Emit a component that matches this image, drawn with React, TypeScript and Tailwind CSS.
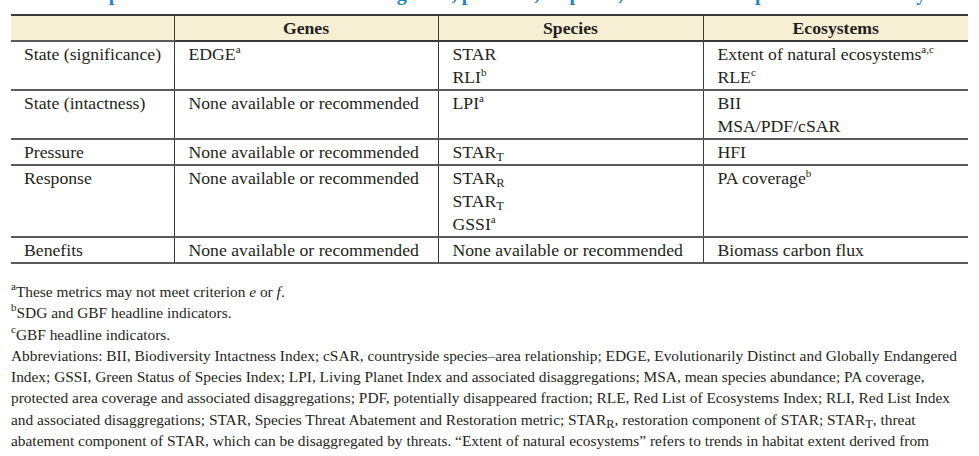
import { FC, ReactNode } from "react";

const serif = { fontFamily: '"Liberation Serif", "Times New Roman", serif' };

const Sup: FC<{ children: ReactNode }> = ({ children }) => (
  <sup className="text-[11px] relative -top-[7px]">{children}</sup>
);

const Sub: FC<{ children: ReactNode }> = ({ children }) => (
  <sub className="text-[12.5px] relative top-[3px]">{children}</sub>
);

const none = "None available or recommended";

const rows: { label: string; genes: ReactNode[]; species: ReactNode[]; eco: ReactNode[] }[] = [
  {
    label: "State (significance)",
    genes: [<>EDGE<Sup>a</Sup></>],
    species: ["STAR", <>RLI<Sup>b</Sup></>],
    eco: [<>Extent of natural ecosystems<Sup>a,c</Sup></>, <>RLE<Sup>c</Sup></>],
  },
  {
    label: "State (intactness)",
    genes: [none],
    species: [<>LPI<Sup>a</Sup></>],
    eco: ["BII", "MSA/PDF/cSAR"],
  },
  {
    label: "Pressure",
    genes: [none],
    species: [<>STAR<Sub>T</Sub></>],
    eco: ["HFI"],
  },
  {
    label: "Response",
    genes: [none],
    species: [<>STAR<Sub>R</Sub></>, <>STAR<Sub>T</Sub></>, <>GSSI<Sup>a</Sup></>],
    eco: [<>PA coverage<Sup>b</Sup></>],
  },
  {
    label: "Benefits",
    genes: [none],
    species: [none],
    eco: ["Biomass carbon flux"],
  },
];

const Lines: FC<{ items: ReactNode[] }> = ({ items }) => (
  <>
    {items.map((item, i) => (
      <div key={i} className="whitespace-nowrap">
        {item}
      </div>
    ))}
  </>
);

export default function App() {
  return (
    <div className="w-[979px] h-[456px] overflow-hidden bg-white text-[#231f20]" style={serif}>
      <div className="pl-[11px] w-[968px]">
        <div className="-mt-[19px] h-[24px] leading-[24px] text-[20px] font-bold text-[#2383c6] whitespace-nowrap">
          Table 1 Proposed set of metrics for monitoring state, pressure, response, and benefits aspects of biodiversity
        </div>
        <table className="mt-[9px] w-[957px] table-fixed border-collapse text-[17.7px] leading-[23px]">
          <colgroup>
            <col className="w-[163px]" />
            <col className="w-[264px]" />
            <col className="w-[265px]" />
            <col className="w-[265px]" />
          </colgroup>
          <thead>
            <tr className="bg-[#f6efd4] border-t-2 border-[#3a3a3a] font-bold">
              <th className="pt-[1px] pb-[0px] border-b-2 border-[#5a5a5a]"></th>
              <th className="pt-[1px] pb-[0px] border-b-2 border-l border-[#3a3a3a] text-center">Genes</th>
              <th className="pt-[1px] pb-[0px] border-b-2 border-l border-[#3a3a3a] text-center">Species</th>
              <th className="pt-[1px] pb-[0px] border-b-2 border-l border-[#3a3a3a] text-center">Ecosystems</th>
            </tr>
          </thead>
          <tbody>
            {rows.map((r) => (
              <tr key={r.label} className="align-top border-b-2 border-[#5a5a5a]">
                <td className="pt-[1px] pl-[13px] whitespace-nowrap">{r.label}</td>
                <td className="pt-[1px] pl-[14px] border-l border-[#3a3a3a]">
                  <Lines items={r.genes} />
                </td>
                <td className="pt-[1px] pl-[14px] border-l border-[#3a3a3a]">
                  <Lines items={r.species} />
                </td>
                <td className="pt-[1px] pl-[14px] border-l border-[#3a3a3a]">
                  <Lines items={r.eco} />
                </td>
              </tr>
            ))}
          </tbody>
        </table>

        <div className="mt-[17px] text-[15.4px] leading-[21.3px] whitespace-nowrap">
          <div>
            <Sup>a</Sup>These metrics may not meet criterion <i>e</i> or <i>f</i>.
          </div>
          <div>
            <Sup>b</Sup>SDG and GBF headline indicators.
          </div>
          <div>
            <Sup>c</Sup>GBF headline indicators.
          </div>
          <div>
            Abbreviations: BII, Biodiversity Intactness Index; cSAR, countryside species–area relationship; EDGE, Evolutionarily Distinct and Globally Endangered
          </div>
          <div>
            Index; GSSI, Green Status of Species Index; LPI, Living Planet Index and associated disaggregations; MSA, mean species abundance; PA coverage,
          </div>
          <div>
            protected area coverage and associated disaggregations; PDF, potentially disappeared fraction; RLE, Red List of Ecosystems Index; RLI, Red List Index
          </div>
          <div>
            and associated disaggregations; STAR, Species Threat Abatement and Restoration metric; STAR<Sub>R</Sub>, restoration component of STAR; STAR<Sub>T</Sub>, threat
          </div>
          <div>
            abatement component of STAR, which can be disaggregated by threats. “Extent of natural ecosystems” refers to trends in habitat extent derived from
          </div>
          <div>remote sensing.</div>
        </div>
      </div>
    </div>
  );
}
